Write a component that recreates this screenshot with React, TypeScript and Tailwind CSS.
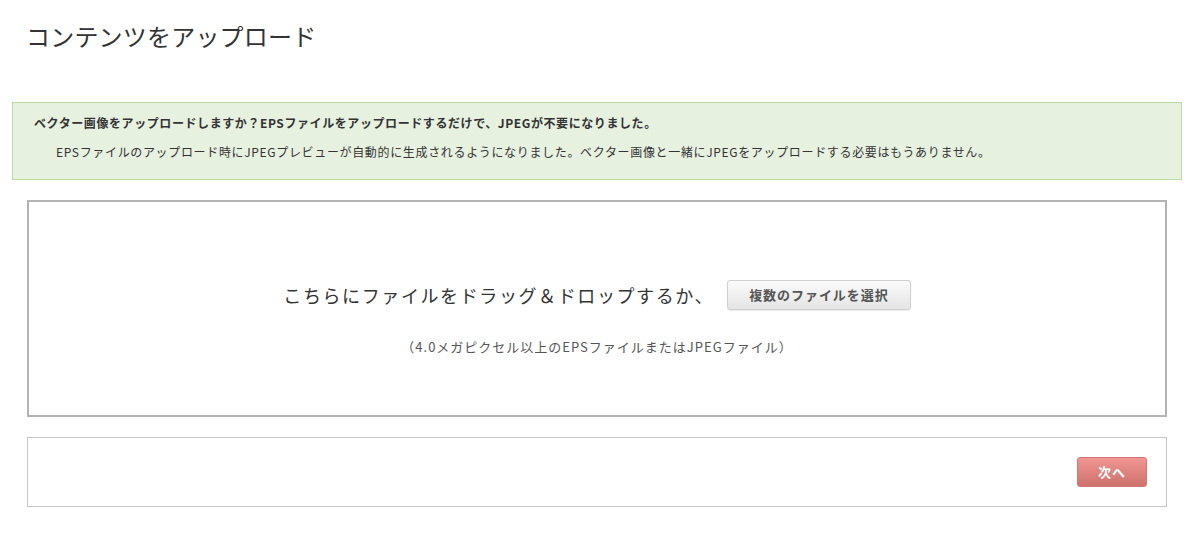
import React from 'react';

const font = { fontFamily: '"Noto Sans CJK JP", "Noto Sans", sans-serif' };

export default function App() {
  return (
    <div className="min-h-[536px] w-[1195px] bg-white text-[#333]" style={font}>
      <div className="pl-[26px] pt-[20px] h-[102px]">
        <h1 className="text-[24px] leading-[32px] font-normal text-[#333] tracking-[0.2px]">コンテンツをアップロード</h1>
      </div>

      <div className="ml-[12px] mr-[13px] h-[78px] border border-[#b9dca6] bg-[#e7f1df] pl-[21px] pt-[11px]">
        <p className="text-[12px] leading-[18px] font-bold text-[#333] tracking-[0.58px]">
          ベクター画像をアップロードしますか？EPSファイルをアップロードするだけで、JPEGが不要になりました。
        </p>
        <p className="mt-[11px] pl-[22px] text-[12px] leading-[18px] text-[#333] tracking-[0.66px]">
          EPSファイルのアップロード時にJPEGプレビューが自動的に生成されるようになりました。ベクター画像と一緒にJPEGをアップロードする必要はもうありません。
        </p>
      </div>

      <div className="ml-[27px] mr-[28px] mt-[20px] h-[217px] border-2 border-[#b3b3b3] flex flex-col items-center pt-[78px]">
        <div className="flex items-center gap-[13px]">
          <span className="text-[18px] leading-[28px] text-[#333] tracking-[1.6px]">こちらにファイルをドラッグ＆ドロップするか、</span>
          <button
            type="button"
            className="h-[30px] px-[21px] rounded-[3px] border border-[#cfcfcf] bg-gradient-to-b from-[#fbfbfb] to-[#e4e4e4] text-[13px] font-bold text-[#555] tracking-[0.95px] shadow-[0_1px_1px_rgba(0,0,0,0.08)]"
          >
            複数のファイルを選択
          </button>
        </div>
        <p className="mt-[28px] text-[13px] leading-[18px] text-[#555] tracking-[1px]">
          （4.0メガピクセル以上のEPSファイルまたはJPEGファイル）
        </p>
      </div>

      <div className="ml-[27px] mr-[28px] mt-[20px] h-[70px] border border-[#c6c6c6] flex items-center justify-end pr-[19px]">
        <button
          type="button"
          className="h-[30px] w-[70px] rounded-[3px] border border-[#d27773] bg-gradient-to-b from-[#f09693] to-[#cf716d] text-[13px] font-bold text-white tracking-[1px]"
        >
          次へ
        </button>
      </div>
    </div>
  );
}
